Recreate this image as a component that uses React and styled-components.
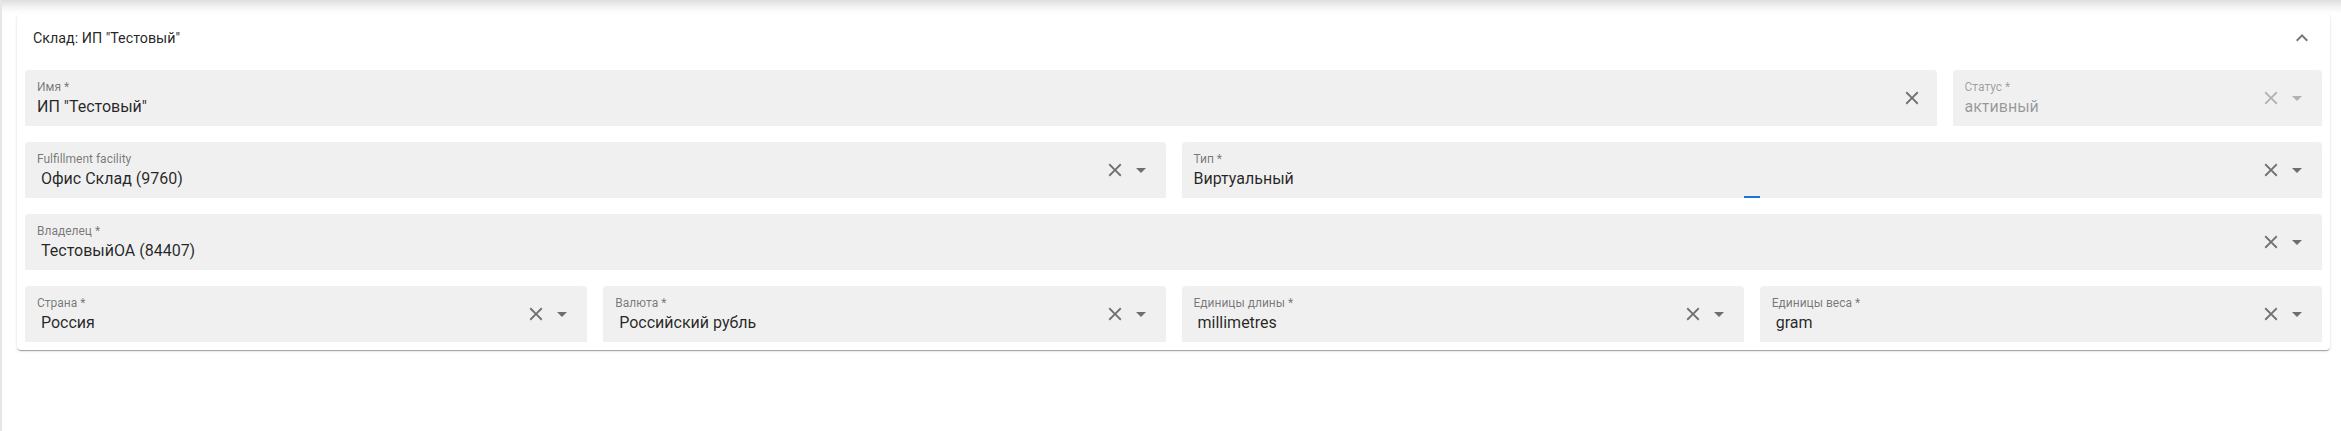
import React from 'react';
import styled, { createGlobalStyle } from 'styled-components';

const GlobalStyle = createGlobalStyle`
  html, body {
    margin: 0;
    padding: 0;
    background: #fff;
  }
  body {
    font-family: Roboto, "Liberation Sans", Arial, sans-serif;
    color: rgba(0, 0, 0, 0.87);
  }
`

const Page = styled.div`
  min-height: 431px;
  box-sizing: border-box;
  border-left: 2px solid #e6e6e6;
  padding: 14px 11px 0 15px;
  background: linear-gradient(to bottom, #dedede 0, #f0f0f0 6px, #fff 13px);
`

const Card = styled.section`
  background: #fff;
  border-radius: 4px;
  box-shadow: 0 2px 1px -1px rgba(0, 0, 0, 0.2), 0 1px 1px 0 rgba(0, 0, 0, 0.14), 0 1px 3px 0 rgba(0, 0, 0, 0.12);
`

const Header = styled.div`
  height: 48px;
  display: flex;
  align-items: center;
  justify-content: space-between;
  padding: 0 16px;
`

const Title = styled.div`
  font-size: 14.3px;
  color: rgba(0, 0, 0, 0.87);
`

const Body = styled.div`
  padding: 8px 8px 8px;
  display: grid;
  grid-template-columns: repeat(12, 1fr);
  gap: 16px;
`

const Field = styled.div`
  grid-column: span ${p => p.span};
  position: relative;
  height: 56px;
  box-sizing: border-box;
  display: flex;
  align-items: center;
  padding: 0 13px 0 12px;
  background: #f0f0f0;
  border-radius: 4px 4px 0 0;
  min-width: 0;
`

const Content = styled.div`
  flex: 1;
  align-self: stretch;
  display: flex;
  flex-direction: column;
  padding-top: 10px;
  min-width: 0;
`

const Label = styled.div`
  font-size: 12px;
  line-height: 14px;
  color: ${p => (p.disabled ? 'rgba(0, 0, 0, 0.36)' : 'rgba(0, 0, 0, 0.52)')};
  white-space: nowrap;
`

const Value = styled.div`
  margin-top: 3px;
  padding-left: ${p => (p.indent ? '4px' : '0')};
  font-size: 16px;
  line-height: 19px;
  color: ${p => (p.disabled ? 'rgba(0, 0, 0, 0.38)' : 'rgba(0, 0, 0, 0.85)')};
  white-space: nowrap;
`

const Adornments = styled.div`
  display: flex;
  align-items: center;
  gap: 2px;
`

const IconBox = styled.span`
  width: 24px;
  height: 24px;
  display: flex;
  align-items: center;
  justify-content: center;
  color: ${p => (p.disabled ? 'rgba(0, 0, 0, 0.26)' : 'rgba(0, 0, 0, 0.54)')};
  svg {
    display: block;
  }
`

const Underline = styled.span`
  position: absolute;
  left: 50%;
  bottom: 0;
  width: 16px;
  height: 2px;
  margin-left: -8px;
  background: #1976d2;
`

const CloseIcon = () => (
  <svg width="22" height="22" viewBox="0 0 24 24" fill="currentColor">
    <path d="M19 6.41 17.59 5 12 10.59 6.41 5 5 6.41 10.59 12 5 17.59 6.41 19 12 13.41 17.59 19 19 17.59 13.41 12z" />
  </svg>
)

const ArrowIcon = () => (
  <svg width="24" height="24" viewBox="0 0 24 24" fill="currentColor">
    <path d="M7 10l5 5 5-5z" />
  </svg>
)

const ExpandLess = () => (
  <svg width="24" height="24" viewBox="0 0 24 24" fill="rgba(0,0,0,0.54)">
    <path d="M12 8l-6 6 1.41 1.41L12 10.83l4.59 4.58L18 14z" />
  </svg>
)

const fields = [
  { label: 'Имя *', value: 'ИП "Тестовый"', span: 10, arrow: false },
  { label: 'Статус *', value: 'активный', span: 2, disabled: true },
  { label: 'Fulfillment facility', value: 'Офис Склад (9760)', span: 6, indent: true },
  { label: 'Тип *', value: 'Виртуальный', span: 6, focused: true },
  { label: 'Владелец *', value: 'ТестовыйОА (84407)', span: 12, indent: true },
  { label: 'Страна *', value: 'Россия', span: 3, indent: true },
  { label: 'Валюта *', value: 'Российский рубль', span: 3, indent: true },
  { label: 'Единицы длины *', value: 'millimetres', span: 3, indent: true },
  { label: 'Единицы веса *', value: 'gram', span: 3, indent: true },
]

function SelectField({ label, value, span, arrow = true, disabled, indent, focused }) {
  return (
    <Field span={span}>
      <Content>
        <Label disabled={disabled}>{label}</Label>
        <Value disabled={disabled} indent={indent}>{value}</Value>
      </Content>
      <Adornments>
        <IconBox disabled={disabled}><CloseIcon /></IconBox>
        {arrow && <IconBox disabled={disabled}><ArrowIcon /></IconBox>}
      </Adornments>
      {focused && <Underline />}
    </Field>
  )
}

export default function App() {
  return (
    <Page>
      <GlobalStyle />
      <Card>
        <Header>
          <Title>Склад: ИП "Тестовый"</Title>
          <ExpandLess />
        </Header>
        <Body>
          {fields.map((f) => (
            <SelectField key={f.label} {...f} />
          ))}
        </Body>
      </Card>
    </Page>
  )
}
